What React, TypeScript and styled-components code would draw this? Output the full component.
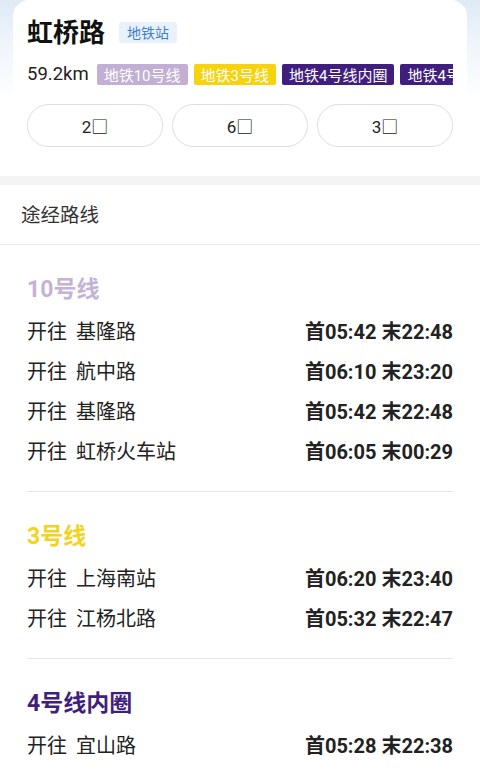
import React from 'react';
import styled, { createGlobalStyle } from 'styled-components';

const GlobalStyle = createGlobalStyle`
  html, body {
    margin: 0;
    padding: 0;
    background: #ffffff;
  }
  body {
    font-family: Roboto, "Noto Sans CJK SC", sans-serif;
    color: #222;
    width: 480px;
  }
`;

const Page = styled.div`
  width: 480px;
  min-height: 784px;
  background: #fff;
  overflow: hidden;
`;

const HeaderArea = styled.div`
  background: linear-gradient(180deg, #dfeaf6 0px, #eef4fa 40px, #ffffff 100px);
  padding: 0 13px;
`;

const StationCard = styled.div`
  background: #fff;
  border-radius: 16px 16px 0 0;
  padding: 17px 14px 29px;
`;

const TitleRow = styled.div`
  display: flex;
  align-items: center;
  gap: 14px;
  height: 32px;
`;

const StationName = styled.h1`
  margin: 0;
  font-size: 26px;
  font-weight: 700;
  line-height: 32px;
  color: #111;
`;

const TypeTag = styled.span`
  display: inline-flex;
  align-items: center;
  height: 21px;
  padding: 0 8px;
  margin-top: -2px;
  background: #e9f1fc;
  color: #3f7fce;
  font-size: 14px;
  border-radius: 3px;
`;

const InfoRow = styled.div`
  display: flex;
  align-items: center;
  gap: 6px;
  margin-top: 14px;
  height: 22px;
  overflow: hidden;
  white-space: nowrap;
`;

const Distance = styled.span`
  font-size: 18.5px;
  color: #222;
  margin-right: 2px;
  flex-shrink: 0;
`;

const LineTag = styled.span<{ $bg: string }>`
  flex-shrink: 0;
  display: inline-flex;
  align-items: center;
  height: 21px;
  padding: 0 7px;
  background: ${p => p.$bg};
  color: #fff;
  font-size: 15px;
  border-radius: 2px;
`;

const ExitRow = styled.div`
  display: grid;
  grid-template-columns: repeat(3, 1fr);
  gap: 9px;
  margin-top: 19px;
`;

const ExitButton = styled.button`
  height: 43px;
  border: 1px solid #dedede;
  border-radius: 22px;
  background: #fff;
  font-family: Roboto, "Noto Sans CJK SC", sans-serif;
  font-size: 17px;
  color: #222;
  padding: 0;
`;

const GapBand = styled.div`
  height: 9px;
  background: #f4f4f4;
`;

const SectionHeader = styled.div`
  height: 60px;
  box-sizing: border-box;
  display: flex;
  align-items: center;
  padding: 0 21px 3px;
  font-size: 19.5px;
  color: #333;
  border-bottom: 1px solid #ececec;
`;

const RouteList = styled.div`
  padding: 0 27px;
`;

const LineGroup = styled.div`
  padding: 30px 0 21px;
  & + & {
    border-top: 1px solid #e6e6e6;
  }
`;

const LineTitle = styled.div<{ $color: string }>`
  font-size: 23px;
  font-weight: 700;
  line-height: 30px;
  color: ${p => p.$color};
  margin-bottom: 5px;
`;

const RouteRow = styled.div`
  display: flex;
  align-items: center;
  justify-content: space-between;
  height: 40px;
  font-size: 20px;
`;

const Direction = styled.span`
  color: #222;
  word-spacing: 4px;
`;

const Times = styled.span`
  color: #222;
  font-weight: 700;
`;

type Route = { to: string; first: string; last: string };
type Line = { name: string; color: string; routes: Route[] };

const lines: Line[] = [
  {
    name: '10号线',
    color: '#c4b3d6',
    routes: [
      { to: '基隆路', first: '05:42', last: '22:48' },
      { to: '航中路', first: '06:10', last: '23:20' },
      { to: '基隆路', first: '05:42', last: '22:48' },
      { to: '虹桥火车站', first: '06:05', last: '00:29' },
    ],
  },
  {
    name: '3号线',
    color: '#f3d31c',
    routes: [
      { to: '上海南站', first: '06:20', last: '23:40' },
      { to: '江杨北路', first: '05:32', last: '22:47' },
    ],
  },
  {
    name: '4号线内圈',
    color: '#3f1e7e',
    routes: [{ to: '宜山路', first: '05:28', last: '22:38' }],
  },
];

const tags = [
  { label: '地铁10号线', bg: '#c2b0d4' },
  { label: '地铁3号线', bg: '#f6d30c' },
  { label: '地铁4号线内圈', bg: '#3f1e7e' },
  { label: '地铁4号线外圈', bg: '#3f1e7e' },
];

const App: React.FC = () => {
  return (
    <>
      <GlobalStyle />
      <Page>
        <HeaderArea>
          <StationCard>
            <TitleRow>
              <StationName>虹桥路</StationName>
              <TypeTag>地铁站</TypeTag>
            </TitleRow>
            <InfoRow>
              <Distance>59.2km</Distance>
              {tags.map(t => (
                <LineTag key={t.label} $bg={t.bg}>{t.label}</LineTag>
              ))}
            </InfoRow>
            <ExitRow>
              <ExitButton>2□</ExitButton>
              <ExitButton>6□</ExitButton>
              <ExitButton>3□</ExitButton>
            </ExitRow>
          </StationCard>
        </HeaderArea>
        <GapBand />
        <SectionHeader>途经路线</SectionHeader>
        <RouteList>
          {lines.map(line => (
            <LineGroup key={line.name}>
              <LineTitle $color={line.color}>{line.name}</LineTitle>
              {line.routes.map((r, i) => (
                <RouteRow key={i}>
                  <Direction>开往 {r.to}</Direction>
                  <Times>首{r.first} 末{r.last}</Times>
                </RouteRow>
              ))}
            </LineGroup>
          ))}
        </RouteList>
      </Page>
    </>
  );
};

export default App;
